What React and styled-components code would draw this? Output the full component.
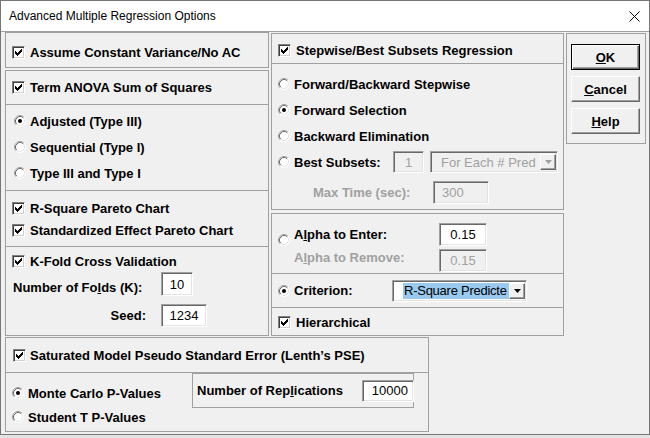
import React from 'react';
import styled, { createGlobalStyle } from 'styled-components';

const GlobalStyle = createGlobalStyle`
  html, body {
    margin: 0;
    padding: 0;
    background: #e4e4e4;
  }
  body {
    font-family: "Liberation Sans", Arial, sans-serif;
  }
  * {
    box-sizing: border-box;
  }
`;

const Dialog = styled.div`
  width: 650px;
  height: 435px;
  background: #f0f0f0;
  border: 1px solid #767676;
  display: flex;
  flex-direction: column;
`;

const TitleBar = styled.div`
  height: 31px;
  flex: none;
  background: #fff;
  border-bottom: 1px solid #a0a0a0;
  display: flex;
  align-items: center;
  justify-content: space-between;
  padding: 0 9px 0 8px;
  font-size: 12px;
  color: #000;
`;

const Body = styled.div`
  display: flex;
  flex-direction: column;
  gap: 1px;
  padding-left: 4px;
  font-size: 13px;
  font-weight: bold;
  color: #000;
`;

const TopRow = styled.div`
  display: flex;
  gap: 2px;
  height: 304px;
  align-items: flex-start;
`;

const Column = styled.div`
  width: ${p => p.$w}px;
  display: flex;
  flex-direction: column;
  gap: ${p => p.$gap}px;
  padding-top: ${p => p.$pt || 0}px;
`;

const Box = styled.div`
  width: ${p => (p.$w ? `${p.$w}px` : 'auto')};
  height: ${p => p.$h}px;
  flex: none;
  border: 1px solid #a0a0a0;
  display: flex;
  flex-direction: column;
`;

const Section = styled.div`
  border-top: 1px solid #a0a0a0;
  height: ${p => (p.$h ? `${p.$h}px` : 'auto')};
  flex: ${p => (p.$h ? 'none' : 1)};
  padding: ${p => p.$pt || 0}px 0 0 ${p => p.$pl || 0}px;
  display: flex;
  flex-direction: ${p => p.$dir || 'column'};
`;

const Row = styled.div`
  display: flex;
  align-items: center;
  flex: none;
  height: ${p => p.$h}px;
  gap: ${p => (p.$gap === undefined ? 5 : p.$gap)}px;
  padding-left: ${p => p.$pl || 0}px;
  padding-top: ${p => p.$pt || 0}px;
  margin-top: ${p => p.$mt || 0}px;
  white-space: nowrap;
`;

const Label = styled.span`
  width: ${p => (p.$w ? `${p.$w}px` : 'auto')};
  flex: none;
  color: ${p => (p.$disabled ? '#a0a0a0' : '#000')};
  text-align: ${p => p.$align || 'left'};
  padding-right: ${p => p.$pr || 0}px;
  align-self: ${p => p.$self || 'auto'};
  padding-top: ${p => p.$pt || 0}px;
`;

const U = styled.span`
  text-decoration: underline;
`;

const Field = styled.div`
  width: ${p => p.$w}px;
  height: ${p => p.$h || 22}px;
  flex: none;
  display: flex;
  align-items: center;
  justify-content: ${p => p.$align || 'center'};
  padding: 0 ${p => p.$px || 4}px;
  margin-left: ${p => (p.$push ? 'auto' : `${p.$ml || 0}px`)};
  margin-right: ${p => p.$mr || 0}px;
  background: ${p => (p.$disabled ? '#f0f0f0' : '#fff')};
  color: ${p => (p.$disabled ? '#a0a0a0' : '#000')};
  font-weight: normal;
  font-size: 13px;
  border: 1px solid;
  border-color: #a0a0a0 #fff #fff #a0a0a0;
  box-shadow: inset 1px 1px 0 #696969, inset -1px -1px 0 #e3e3e3;
`;

const Select = styled(Field)`
  justify-content: flex-start;
  padding: 2px 1px 2px ${p => p.$pl}px;
`;

const SelectText = styled.span`
  flex: 1;
  height: 100%;
  display: flex;
  align-items: center;
  padding-left: 1px;
  white-space: nowrap;
  letter-spacing: ${p => (p.$selected ? '-0.25px' : '0')};
  background: ${p => (p.$selected ? '#99c9ef' : 'transparent')};
`;

const ArrowButton = styled.span`
  width: 16px;
  height: 100%;
  flex: none;
  display: flex;
  align-items: center;
  justify-content: center;
  background: #f0f0f0;
  border: 1px solid;
  border-color: #fff #696969 #696969 #fff;
  box-shadow: inset -1px -1px 0 #a0a0a0;
`;

const CheckBox = styled.span`
  width: 13px;
  height: 13px;
  flex: none;
  display: flex;
  align-items: center;
  justify-content: center;
  background: #fff;
  border: 1px solid;
  border-color: #808080 #fff #fff #808080;
  box-shadow: inset 1px 1px 0 #404040, inset -1px -1px 0 #d4d0c8;
`;

const FieldsColumn = styled.div`
  display: flex;
  flex-direction: column;
  gap: 4px;
  padding-top: 7px;
`;

const RadioSlot = styled.span`
  display: flex;
  align-self: flex-start;
  margin-top: ${p => p.$mt}px;
`;

const InnerBox = styled.div`
  width: 222px;
  height: 35px;
  flex: none;
  border: 1px solid #a0a0a0;
  display: flex;
  align-items: center;
  padding-left: 4px;
  margin-left: auto;
  margin-right: 14px;
`;

const RadioColumn = styled.div`
  display: flex;
  flex-direction: column;
  padding: 8px 0 0 6px;
`;

const ButtonBox = styled.div`
  width: 80px;
  height: 111px;
  margin-top: 1px;
  border: 1px solid #a0a0a0;
  display: flex;
  flex-direction: column;
  gap: 6px;
  padding: 10px 0 0 4px;
`;

const Button = styled.button`
  width: 69px;
  height: 26px;
  padding: 0;
  font-family: "Liberation Sans", Arial, sans-serif;
  font-size: 13px;
  font-weight: bold;
  color: #000;
  background: #f0f0f0;
  border: 1px solid;
  border-color: ${p => (p.$default ? '#000' : '#fff #696969 #696969 #fff')};
  box-shadow: ${p =>
    p.$default
      ? 'inset 1px 1px 0 #fff, inset -1px -1px 0 #696969, inset -2px -2px 0 #a0a0a0'
      : 'inset -1px -1px 0 #a0a0a0'};
`;

const CHECK_PIXELS = [
  [6, 0, 1], [5, 1, 2], [0, 2, 1], [4, 2, 3], [0, 3, 2],
  [3, 3, 3], [0, 4, 5], [1, 5, 3], [2, 6, 1],
];

const Check = ({ checked = true }) => (
  <CheckBox>
    {checked && (
      <svg width="7" height="7" viewBox="0 0 7 7" shapeRendering="crispEdges">
        {CHECK_PIXELS.map(([x, y, w]) => (
          <rect key={`${x}-${y}`} x={x} y={y} width={w} height="1" fill="#000" />
        ))}
      </svg>
    )}
  </CheckBox>
);

const Radio = ({ checked }) => (
  <svg width="12" height="12" viewBox="0 0 12 12" style={{ flex: 'none' }}>
    <circle cx="6" cy="6" r="5.5" fill="#fff" />
    <path d="M2.11 9.89A5.5 5.5 0 0 1 9.89 2.11" stroke="#a0a0a0" fill="none" />
    <path d="M9.89 2.11A5.5 5.5 0 0 1 2.11 9.89" stroke="#ffffff" fill="none" />
    <path d="M2.82 9.18A4.5 4.5 0 0 1 9.18 2.82" stroke="#696969" fill="none" />
    <path d="M9.18 2.82A4.5 4.5 0 0 1 2.82 9.18" stroke="#e3e3e3" fill="none" />
    {checked && <circle cx="6" cy="6" r="2" fill="#000" />}
  </svg>
);

const DownArrow = ({ color }) => (
  <svg width="7" height="4" viewBox="0 0 7 4">
    <path d="M0 0h7L3.5 4z" fill={color} />
  </svg>
);

const CloseIcon = () => (
  <svg width="11" height="11" viewBox="0 0 11 11">
    <path d="M0.5 0.5L10.5 10.5M10.5 0.5L0.5 10.5" stroke="#000" strokeWidth="1" />
  </svg>
);

const App = () => (
  <>
    <GlobalStyle />
    <Dialog>
      <TitleBar>
        <span>Advanced Multiple Regression Options</span>
        <CloseIcon />
      </TitleBar>
      <Body>
        <TopRow>
          <Column $w={264} $gap={2}>
            <Box $h={36}>
              <Row $h={34} $pl={6} $pt={4}>
                <Check />
                <span>Assume Constant Variance/No AC</span>
              </Row>
            </Box>
            <Box $h={266}>
              <Row $h={33} $pl={6}>
                <Check />
                <span>Term ANOVA Sum of Squares</span>
              </Row>
              <Section $h={86} $pt={3} $pl={8}>
                <Row $h={26} $gap={4}>
                  <Radio checked />
                  <span>Adjusted (Type III)</span>
                </Row>
                <Row $h={26} $gap={4}>
                  <Radio />
                  <span>Sequential (Type I)</span>
                </Row>
                <Row $h={26} $gap={4}>
                  <Radio />
                  <span>Type III and Type I</span>
                </Row>
              </Section>
              <Section $h={56} $pt={6} $pl={6}>
                <Row $h={22}>
                  <Check />
                  <span>R-Square Pareto Chart</span>
                </Row>
                <Row $h={22}>
                  <Check />
                  <span>Standardized Effect Pareto Chart</span>
                </Row>
              </Section>
              <Section $pt={4} $pl={6}>
                <Row $h={20}>
                  <Check />
                  <span>K-Fold Cross Validation</span>
                </Row>
                <Row $h={24} $mt={1} $gap={0} $pl={1}>
                  <Label $w={135} $self="flex-start" $pt={8}>
                    Number of Fo<U>l</U>ds (K):
                  </Label>
                  <Field $w={32} $h={24} $ml={13}>10</Field>
                </Row>
                <Row $h={23} $mt={8} $gap={0} $pl={1}>
                  <Label $w={135} $align="right" $pr={2}>Seed:</Label>
                  <Field $w={46} $h={23} $ml={13}>1234</Field>
                </Row>
              </Section>
            </Box>
          </Column>

          <Column $w={293} $gap={3} $pt={1}>
            <Box $h={177}>
              <Row $h={29} $pl={6} $pt={3}>
                <Check />
                <span>Stepwise/Best Subsets Regression</span>
              </Row>
              <Section $pt={7} $pl={6}>
                <Row $h={26} $gap={4}>
                  <Radio />
                  <span>Forward/Backward Stepwise</span>
                </Row>
                <Row $h={26} $gap={4}>
                  <Radio checked />
                  <span>Forward Selection</span>
                </Row>
                <Row $h={26} $gap={4}>
                  <Radio />
                  <span>Backward Elimination</span>
                </Row>
                <Row $h={26} $gap={4}>
                  <Radio />
                  <Label $w={95}>Best Subsets:</Label>
                  <Field $w={31} $disabled>1</Field>
                  <Select $w={128} $pl={9} $ml={2} $disabled>
                    <SelectText>For Each # Pred</SelectText>
                    <ArrowButton>
                      <DownArrow color="#a0a0a0" />
                    </ArrowButton>
                  </Select>
                </Row>
                <Row $h={24} $mt={5} $gap={0} $pl={35}>
                  <Label $w={120} $disabled>Max Time (sec):</Label>
                  <Field $w={56} $h={23} $align="flex-start" $px={8} $disabled>300</Field>
                </Row>
              </Section>
            </Box>
            <Box $h={123}>
              <Row $h={59} $pl={6} $gap={4}>
                <RadioSlot $mt={20}>
                  <Radio />
                </RadioSlot>
                <FieldsColumn>
                  <Row $h={22} $gap={0}>
                    <Label $w={145}>A<U>l</U>pha to Enter:</Label>
                    <Field $w={48} $h={23}>0.15</Field>
                  </Row>
                  <Row $h={22} $gap={0}>
                    <Label $w={145} $self="flex-start" $pt={1} $disabled>
                      A<U>l</U>pha to Remove:
                    </Label>
                    <Field $w={48} $h={23} $disabled>0.15</Field>
                  </Row>
                </FieldsColumn>
              </Row>
              <Section $h={34} $pl={6}>
                <Row $h={33} $gap={4}>
                  <Radio checked />
                  <Label $w={94}>Criterion:</Label>
                  <Select $w={135} $pl={10}>
                    <SelectText $selected>R-Square Predicte</SelectText>
                    <ArrowButton>
                      <DownArrow color="#000" />
                    </ArrowButton>
                  </Select>
                </Row>
              </Section>
              <Section $pl={6}>
                <Row $h={26} $pt={2}>
                  <Check />
                  <span>Hierarchical</span>
                </Row>
              </Section>
            </Box>
          </Column>

          <ButtonBox>
            <Button $default>
              <U>O</U>K
            </Button>
            <Button>
              <U>C</U>ancel
            </Button>
            <Button>
              <U>H</U>elp
            </Button>
          </ButtonBox>
        </TopRow>

        <Box $w={424} $h={95}>
          <Row $h={34} $pl={7} $gap={4}>
            <Check />
            <span>Saturated Model Pseudo Standard Error (Lenth’s PSE)</span>
          </Row>
          <Section $dir="row">
            <RadioColumn>
              <Row $h={24} $gap={4}>
                <Radio checked />
                <span>Monte Carlo P-Values</span>
              </Row>
              <Row $h={24} $gap={4}>
                <Radio />
                <span>Student T P-Values</span>
              </Row>
            </RadioColumn>
            <InnerBox>
              <span>
                Number of Rep<U>l</U>ications
              </span>
              <Field $w={52} $h={22} $push $mr={-1} $align="flex-end" $px={5}>
                10000
              </Field>
            </InnerBox>
          </Section>
        </Box>
      </Body>
    </Dialog>
  </>
);

export default App;
